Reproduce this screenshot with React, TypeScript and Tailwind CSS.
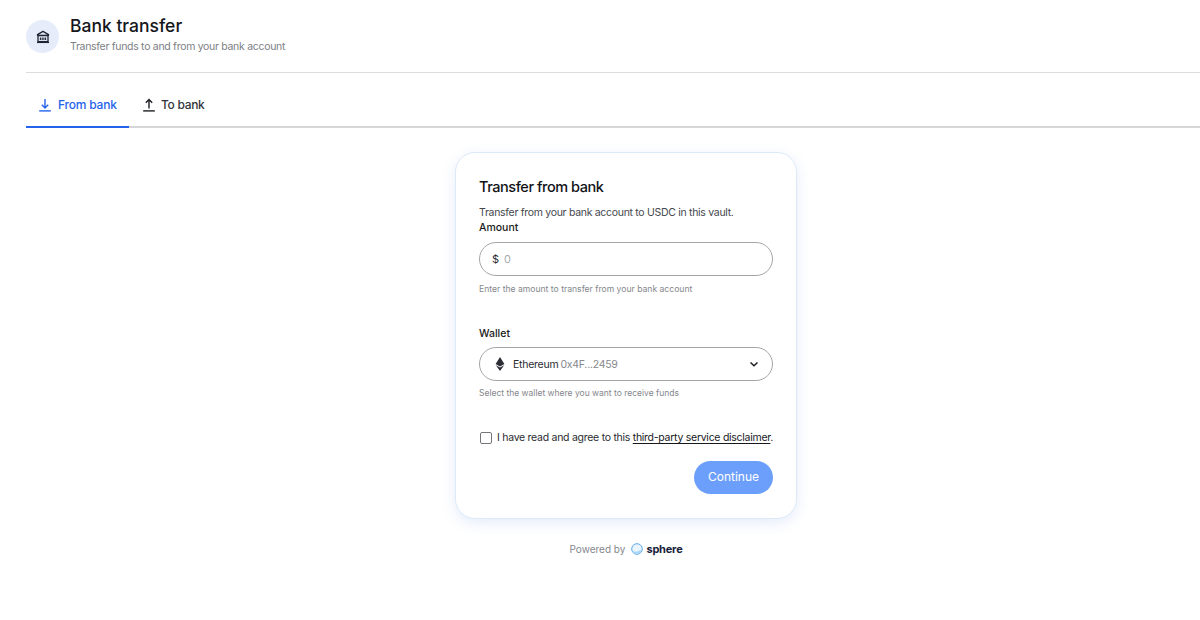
import React from "react";

function BankIcon() {
  return (
    <svg width="14" height="14" viewBox="0 0 14 14" fill="none" stroke="#1f2430" strokeWidth="1.3">
      <path d="M1.5 4.6 7 1.4l5.5 3.2v.7h-11z" strokeLinejoin="round" />
      <rect x="2" y="5.6" width="10" height="6" />
      <path d="M1 12.4h12" />
      <path d="M4.4 7.4v2.6M6.2 7.4v2.6M7.9 7.4v2.6M9.6 7.4v2.6" strokeWidth="1.1" />
    </svg>
  );
}

function TrayArrow({ up, color }: { up?: boolean; color: string }) {
  return (
    <svg width="14" height="14" viewBox="0 0 14 14" fill="none" stroke={color} strokeWidth="1.4">
      <path d="M1.2 12.9h11.6" />
      {up ? <path d="M7 10.4V1.6M3.8 4.7 7 1.5l3.2 3.2" /> : <path d="M7 1v8.8M3.8 6.7 7 9.9l3.2-3.2" />}
    </svg>
  );
}

function EthIcon() {
  return (
    <svg width="10" height="14" viewBox="0 0 10 14" fill="#2a2d34">
      <path d="M5 0 .6 7.1 5 9.6l4.4-2.5z" />
      <path d="M.8 8.2 5 14l4.2-5.8L5 10.6z" />
    </svg>
  );
}

function SphereLogo() {
  return (
    <svg width="12" height="12" viewBox="0 0 12 12" fill="none">
      <circle cx="6" cy="6" r="5.3" stroke="#5fa8e8" strokeWidth="1" fill="#eaf4fc" />
      <path d="M1 7c1.5 2 5 2.6 9.8-.4-.6 3-2.6 4.7-4.8 4.7C3.600 11.300 1.700 9.600 1 7z" fill="#a8d6f6" />
    </svg>
  );
}

export default function App() {
  return (
    <div className="w-[1200px] h-[620px] overflow-hidden bg-white text-[#111318] font-['Inter',sans-serif] pl-[26px]">
      <header className="h-[73px] border-b border-[#dcdcde] flex items-start">
        <div className="mt-[20px] w-[33px] h-[33px] rounded-full bg-[#e6ecfa] flex items-center justify-center">
          <BankIcon />
        </div>
        <div className="ml-[11px] mt-[14px]">
          <h1 className="text-[17.5px] leading-[23px] font-medium text-[#14161b]">Bank transfer</h1>
          <p className="mt-[3px] text-[10.5px] leading-[14px] tracking-[-0.3px] text-[#7d7f85]">Transfer funds to and from your bank account</p>
        </div>
      </header>

      <nav className="h-[55px] border-b-2 border-[#d6d6d8] flex">
        <div className="w-[103px] h-[55px] border-b-2 border-[#2563eb] flex items-center gap-[6px] pl-[12px] pt-[10px] text-[#2563eb] text-[12px] tracking-[-0.2px] font-medium">
          <TrayArrow color="#2563eb" />
          <span>From bank</span>
        </div>
        <div className="ml-[13px] h-[55px] flex items-center gap-[5px] pt-[9px] text-[#33353b] text-[12px] tracking-[-0.3px] font-medium">
          <TrayArrow up color="#1c1e24" />
          <span>To bank</span>
        </div>
      </nav>

      <main className="ml-[429px] mt-[24px] w-[342px]">
        <section className="h-[367px] rounded-[20px] border border-[#dceaf8] bg-white shadow-[0_4px_14px_rgba(70,120,220,0.14)] px-[23px] pt-[24px]">
          <h2 className="text-[14.5px] leading-[20px] tracking-[-0.45px] font-medium text-[#101216]">Transfer from bank</h2>
          <p className="mt-[8px] text-[10.5px] leading-[16px] tracking-[-0.3px] text-[#45474d]">Transfer from your bank account to USDC in this vault.</p>
          <label className="block text-[10.5px] leading-[14px] font-medium text-[#1a1c21]">Amount</label>
          <div className="mt-[7px] h-[34px] rounded-full border border-[#a5a6aa] flex items-center pl-[12px] text-[11px]">
            <span className="text-[#2a2c32]">$</span>
            <span className="ml-[5px] text-[#a9abb0]">0</span>
          </div>
          <p className="mt-[7px] text-[8.6px] leading-[12px] text-[#85878c]">Enter the amount to transfer from your bank account</p>

          <label className="block mt-[32px] text-[10.5px] leading-[14px] font-medium text-[#1a1c21]">Wallet</label>
          <div className="mt-[6px] h-[34px] rounded-full border border-[#a5a6aa] flex items-center pl-[15px] pr-[13px] text-[10.5px] tracking-[-0.25px]">
            <EthIcon />
            <span className="ml-[8px] mt-[1px] text-[#2a2c32]">Ethereum</span>
            <span className="ml-[2px] mt-[1px] text-[#85878c]">0x4F...2459</span>
            <svg className="ml-auto" width="10" height="10" viewBox="0 0 10 10" fill="none" stroke="#1c1e24" strokeWidth="1.5">
              <path d="M1.5 3.5 5 6.8l3.5-3.3" />
            </svg>
          </div>
          <p className="mt-[6px] text-[8.5px] leading-[12px] text-[#85878c]">Select the wallet where you want to receive funds</p>

          <div className="mt-[31px] flex items-center">
            <span className="shrink-0 ml-[1px] w-[12px] h-[12px] rounded-[2px] border-[1.5px] border-[#74767b] bg-white" />
            <span className="ml-[5px] text-[10.5px] leading-[16px] tracking-[-0.27px] text-[#2a2c32] whitespace-nowrap">
              I have read and agree to this <span className="underline underline-offset-2 text-[#17191e]">third-party service disclaimer</span>.
            </span>
          </div>

          <div className="mt-[15px] flex justify-end">
            <button className="w-[79px] h-[33px] rounded-full bg-[#6c9ffb] text-white text-[12px] text-center pb-[1px]">Continue</button>
          </div>
        </section>

        <footer className="mt-[22px] flex items-center justify-center text-[10px] leading-[16px] text-[#85878c]">
          <span>Powered by</span>
          <span className="ml-[6px] mr-[3px] flex"><SphereLogo /></span>
          <span className="text-[11px] tracking-[-0.2px] font-bold text-[#16213a]">sphere</span>
        </footer>
      </main>
    </div>
  );
}
